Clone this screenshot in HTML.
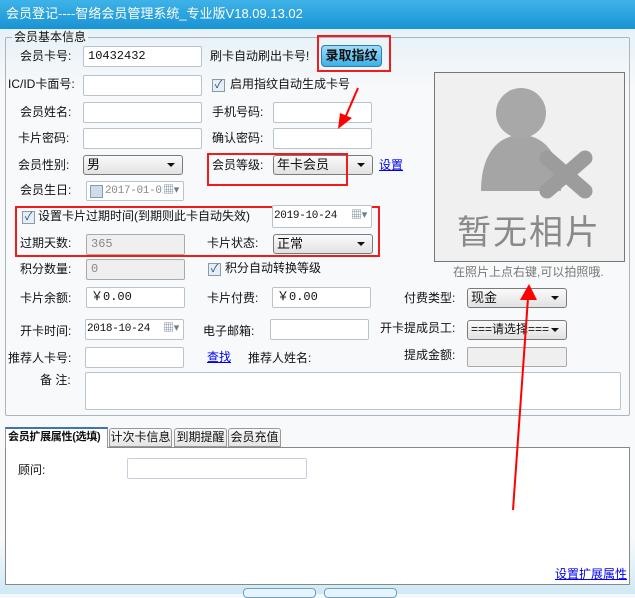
<!DOCTYPE html>
<html><head><meta charset="utf-8"><style>
*{box-sizing:border-box;margin:0;padding:0}
body{width:635px;height:594px;overflow:hidden;background:#f4f8fb;font-family:"Liberation Sans","Noto Sans CJK SC",sans-serif;font-size:12px;color:#111;position:relative}
.a{position:absolute;white-space:nowrap}
.t{position:absolute;white-space:nowrap;line-height:14px}
.in{position:absolute;background:#fff;border:1px solid #b9c3cc;border-radius:2px;padding-left:4px;line-height:18px;font-family:"Liberation Mono","Noto Sans CJK SC",monospace;font-size:12px;overflow:hidden}
.g{background:#efefef;color:#888;border-color:#aaa}
.sel{position:absolute;border:1px solid #7a7a7a;border-radius:3px;background:linear-gradient(#fafafa,#e2e2e2);padding-left:3px;line-height:17px;font-size:13px;overflow:hidden}
.sel:after{content:"";position:absolute;right:7px;top:7px;border:4px solid transparent;border-top:4px solid #111;border-bottom:0}
.dt{font-size:11px;letter-spacing:-0.3px}
.dt:after{content:"▦▾";position:absolute;right:4px;top:0;color:#6b7d93;font-size:11px;background:#fff}
.cb{position:absolute;width:13px;height:13px;border:1px solid #8a9aa8;background:#e6eef5;font-size:11px;line-height:11px;text-align:center;color:#2a4a88}
.rb{position:absolute;border:2px solid #f01c1c}
.tab{position:absolute;top:428px;height:19px;background:linear-gradient(#fafafa,#e4e4e4);border:1px solid #999;border-radius:3px 3px 0 0;text-align:center;line-height:17px;font-size:12px;overflow:hidden}
a{color:#0000ee;text-decoration:underline}
</style></head><body>
<div class="a" style="left:0;top:0;width:635px;height:29px;background:linear-gradient(#3fb3e8,#1893d3);"></div>
<div class="t" style="left:6px;top:7px;color:#fff;font-size:13px">会员登记----智络会员管理系统_专业版V18.09.13.02</div>
<div class="a" style="left:0;top:29px;width:635px;height:565px;background:linear-gradient(#e6f1f7,#f7f9fa 60px,#f7f9fa 510px,#cfe9f6)"></div>
<div class="a" style="left:5px;top:37px;width:625px;height:379px;border:1px solid #a9b5bf;border-radius:2px"></div>
<div class="t" style="left:12px;top:30px;background:#ecf4f8;padding:0 2px">会员基本信息</div>

<div class="t" style="left:20px;top:49px">会员卡号:</div>
<div class="in" style="left:83px;top:46px;width:119px;height:21px">10432432</div>
<div class="t" style="left:210px;top:49px">刷卡自动刷出卡号!</div>
<div class="a" style="left:321px;top:45px;width:61px;height:22px;border:1px solid #2a7fb8;border-radius:4px;background:linear-gradient(#9fdcf8,#3ab0e8);font-weight:bold;font-size:13px;text-align:center;line-height:20px">录取指纹</div>
<div class="rb" style="left:317px;top:35px;width:74px;height:37px"></div>

<div class="t" style="left:8px;top:77px">IC/ID卡面号:</div>
<div class="in" style="left:83px;top:75px;width:119px;height:21px"></div>
<div class="cb" style="left:212px;top:79px">✓</div>
<div class="t" style="left:230px;top:77px">启用指纹自动生成卡号</div>

<div class="t" style="left:20px;top:105px">会员姓名:</div>
<div class="in" style="left:83px;top:102px;width:119px;height:21px"></div>
<div class="t" style="left:212px;top:105px">手机号码:</div>
<div class="in" style="left:273px;top:102px;width:99px;height:21px"></div>

<div class="t" style="left:18px;top:131px">卡片密码:</div>
<div class="in" style="left:83px;top:128px;width:119px;height:21px"></div>
<div class="t" style="left:212px;top:131px">确认密码:</div>
<div class="in" style="left:273px;top:128px;width:99px;height:21px"></div>

<div class="t" style="left:18px;top:158px">会员性别:</div>
<div class="sel" style="left:83px;top:155px;width:100px;height:20px">男</div>
<div class="t" style="left:212px;top:158px">会员等级:</div>
<div class="sel" style="left:273px;top:155px;width:100px;height:20px">年卡会员</div>
<div class="rb" style="left:207px;top:153px;width:141px;height:33px"></div>
<div class="t" style="left:379px;top:158px"><a>设置</a></div>

<div class="t" style="left:20px;top:183px">会员生日:</div>
<div class="in dt" style="left:86px;top:181px;width:98px;height:20px;color:#888;padding-left:18px">2017-01-01</div>
<div class="cb" style="left:90px;top:185px;background:#cde"></div>

<div class="rb" style="left:15px;top:206px;width:365px;height:51px"></div>
<div class="cb" style="left:22px;top:211px">✓</div>
<div class="t" style="left:38px;top:209px">设置卡片过期时间(到期则此卡自动失效)</div>
<div class="in dt" style="left:272px;top:205px;width:100px;height:23px;line-height:21px;padding-left:1px">2019-10-24</div>
<div class="t" style="left:20px;top:236px">过期天数:</div>
<div class="in g" style="left:86px;top:234px;width:99px;height:21px">365</div>
<div class="t" style="left:207px;top:236px">卡片状态:</div>
<div class="sel" style="left:273px;top:234px;width:100px;height:20px">正常</div>

<div class="t" style="left:20px;top:262px">积分数量:</div>
<div class="in g" style="left:86px;top:259px;width:99px;height:21px">0</div>
<div class="cb" style="left:208px;top:263px">✓</div>
<div class="t" style="left:225px;top:261px">积分自动转换等级</div>

<div class="t" style="left:20px;top:291px">卡片余额:</div>
<div class="in" style="left:86px;top:287px;width:99px;height:21px">￥0.00</div>
<div class="t" style="left:207px;top:291px">卡片付费:</div>
<div class="in" style="left:272px;top:287px;width:99px;height:21px">￥0.00</div>
<div class="t" style="left:404px;top:291px">付费类型:</div>
<div class="sel" style="left:467px;top:288px;width:100px;height:20px">现金</div>

<div class="t" style="left:20px;top:324px">开卡时间:</div>
<div class="in dt" style="left:85px;top:319px;width:99px;height:21px;padding-left:1px">2018-10-24</div>
<div class="t" style="left:203px;top:324px">电子邮箱:</div>
<div class="in" style="left:270px;top:319px;width:99px;height:21px"></div>
<div class="t" style="left:380px;top:321px">开卡提成员工:</div>
<div class="sel" style="left:467px;top:320px;width:100px;height:20px;font-size:12px">===请选择===</div>

<div class="t" style="left:8px;top:351px">推荐人卡号:</div>
<div class="in" style="left:85px;top:347px;width:99px;height:21px"></div>
<div class="t" style="left:207px;top:350px"><a>查找</a></div>
<div class="t" style="left:248px;top:351px">推荐人姓名:</div>
<div class="t" style="left:404px;top:348px">提成金额:</div>
<div class="in g" style="left:467px;top:347px;width:100px;height:20px"></div>

<div class="t" style="left:40px;top:373px">备 注:</div>
<div class="in" style="left:85px;top:372px;width:536px;height:38px"></div>

<div class="a" style="left:434px;top:72px;width:191px;height:190px;border:1px solid #777;background:#f0f0f0;overflow:hidden">
<svg width="191" height="190">
<path d="M46 118 C46 80 64 62 86 62 C108 62 126 80 126 118 Z" fill="#a5a5a5"/>
<circle cx="86" cy="40" r="25" fill="#a8a8a8"/>
<g stroke="#9c9c9c" stroke-width="15" stroke-linecap="round"><line x1="112" y1="85" x2="150" y2="118"/><line x1="150" y1="85" x2="112" y2="118"/></g>
</svg>
<div class="t" style="left:22px;top:140px;font-size:34px;line-height:40px;color:#8a8a8a;letter-spacing:2px">暂无相片</div></div>
<div class="t" style="left:453px;top:265px;color:#777">在照片上点右键,可以拍照哦.</div>

<div class="a" style="left:5px;top:427px;width:103px;height:21px;background:#fff;border:1px solid #999;border-top:2px solid #3a76b0;border-bottom:none;font-weight:bold;font-size:11px;letter-spacing:-0.3px;line-height:17px;padding-left:2px;overflow:hidden;z-index:2">会员扩展属性(选填)</div>
<div class="tab" style="left:109px;width:63px">计次卡信息</div>
<div class="tab" style="left:174px;width:53px">到期提醒</div>
<div class="tab" style="left:228px;width:53px">会员充值</div>
<div class="a" style="left:5px;top:447px;width:625px;height:138px;background:#fff;border:1px solid #888"></div>
<div class="t" style="left:18px;top:463px">顾问:</div>
<div class="in" style="left:127px;top:458px;width:180px;height:21px;border-color:#ccd"></div>
<div class="t" style="left:555px;top:567px"><a>设置扩展属性</a></div>
<div class="a" style="left:243px;top:588px;width:73px;height:10px;border:1px solid #6aa0c8;border-radius:4px;background:#e8f4fb"></div>
<div class="a" style="left:324px;top:588px;width:73px;height:10px;border:1px solid #6aa0c8;border-radius:4px;background:#e8f4fb"></div>

<svg class="a" style="left:0;top:0" width="635" height="594">
<line x1="358" y1="88" x2="345" y2="118" stroke="#f00" stroke-width="2"/><polygon points="338,129 340,113 352,118" fill="#f00"/>
<line x1="513" y1="510" x2="528" y2="298" stroke="#f00" stroke-width="2"/><polygon points="529,284 520,300 537,300" fill="#f00"/>
</svg>
</body></html>
